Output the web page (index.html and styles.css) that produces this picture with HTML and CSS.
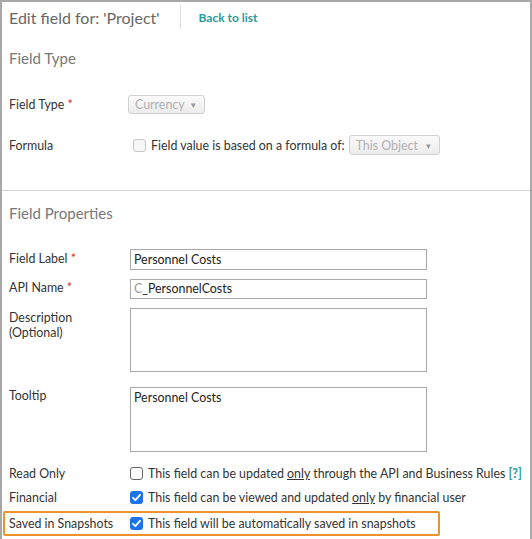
FILE: index.html
```html
<!DOCTYPE html>
<html lang="en">
<head>
  <meta charset="UTF-8">
  <title>Edit field</title>
  <link rel="stylesheet" href="styles.css">
</head>
<body>
  <div class="page">
    <div class="header">
      <span class="title">Edit field for: 'Project'</span>
      <span class="sep"></span>
      <a class="back" href="#">Back to list</a>
    </div>

    <div class="section first">
      <h2>Field Type</h2>
      <div class="row row-type">
        <div class="label">Field Type <span class="req">*</span></div>
        <div class="control"><span class="select sel-currency">Currency <span class="caret">&#9662;</span></span></div>
      </div>
      <div class="row row-formula">
        <div class="label">Formula</div>
        <div class="control inline">
          <span class="check disabled"></span>
          <span class="text">Field value is based on a formula of:</span>
          <span class="select sel-object">This Object <span class="caret">&#9662;</span></span>
        </div>
      </div>
    </div>

    <div class="section second">
      <h2>Field Properties</h2>
      <div class="row row-label">
        <div class="label">Field Label <span class="req">*</span></div>
        <div class="control"><div class="input">Personnel Costs</div></div>
      </div>
      <div class="row row-api">
        <div class="label">API Name <span class="req">*</span></div>
        <div class="control"><div class="input api"><span class="prefix">C</span>_PersonnelCosts</div></div>
      </div>
      <div class="row row-desc">
        <div class="label">Description<br>(Optional)</div>
        <div class="control"><div class="textarea"></div></div>
      </div>
      <div class="row row-tip">
        <div class="label">Tooltip</div>
        <div class="control"><div class="textarea">Personnel Costs</div></div>
      </div>
      <div class="row check-row row-ro">
        <div class="label">Read Only</div>
        <div class="control inline">
          <span class="check"></span>
          <span class="text">This field can be updated <u>only</u> through the API and Business Rules <b class="help">[?]</b></span>
        </div>
      </div>
      <div class="row check-row row-fin">
        <div class="label">Financial</div>
        <div class="control inline">
          <span class="check on"><svg width="13" height="13" viewBox="0 0 13 13"><path d="M3 6.8 L5.4 9.2 L10 3.8" fill="none" stroke="#fff" stroke-width="1.8" stroke-linecap="round" stroke-linejoin="round"/></svg></span>
          <span class="text">This field can be viewed and updated <u>only</u> by financial user</span>
        </div>
      </div>
      <div class="row check-row row-snap highlight">
        <div class="label">Saved in Snapshots</div>
        <div class="control inline">
          <span class="check on"><svg width="13" height="13" viewBox="0 0 13 13"><path d="M3 6.8 L5.4 9.2 L10 3.8" fill="none" stroke="#fff" stroke-width="1.8" stroke-linecap="round" stroke-linejoin="round"/></svg></span>
          <span class="text">This field will be automatically saved in snapshots</span>
        </div>
      </div>
    </div>
  </div>
</body>
</html>
```

FILE: styles.css
```css
body {
  margin: 0;
  font-family: Lato, "Open Sans", sans-serif;
  color: #333;
  background: #fff;
}

.page {
  width: 532px;
  height: 539px;
  border: 2px solid #a8a8a8;
  border-bottom: none;
  box-sizing: border-box;
}

.header {
  display: flex;
  align-items: center;
  height: 30px;
  padding-left: 7px;
}

.title {
  font-size: 16px;
  color: #666;
}

.sep {
  width: 1px;
  height: 24px;
  background: #ddd;
  margin: 0 18px 0 20px;
}

.back {
  font-size: 12px;
  font-weight: bold;
  color: #2a9a9c;
  text-decoration: none;
}

.section {
  padding-left: 7px;
}

.section.first {
  border-bottom: 1px solid #d4d4d4;
  height: 159px;
  box-sizing: border-box;
  padding-top: 16px;
}

.section.second {
  padding-top: 12px;
}

h2 {
  margin: 0;
  font-size: 15px;
  font-weight: normal;
  color: #777;
  line-height: 20px;
}

.row {
  display: flex;
  font-size: 12.4px;
}

.label {
  width: 121px;
  flex: none;
  line-height: 15px;
}

.req {
  color: #e03030;
}

.control {
  flex: 1;
}

.inline {
  display: flex;
  align-items: center;
}

.row-type {
  margin-top: 27px;
  align-items: center;
}

.row-formula {
  margin-top: 21px;
  align-items: center;
}

.select {
  display: inline-flex;
  align-items: center;
  justify-content: space-between;
  white-space: nowrap;
  height: 19px;
  box-sizing: border-box;
  border: 1px solid #d0d0d0;
  border-radius: 3px;
  background: linear-gradient(#fafafa, #ececec);
  color: #b0b0b0;
  padding: 0 8px 0 6px;
  vertical-align: middle;
}

.sel-currency {
  margin-left: -2px;
  width: 77px;
}

.sel-object {
  margin-left: 4px;
  width: 91px;
  height: 20px;
}

.caret {
  font-size: 9px;
  margin-left: 5px;
  color: #999;
}

.check {
  display: inline-flex;
  width: 13px;
  height: 13px;
  box-sizing: border-box;
  border: 1px solid #666;
  border-radius: 3px;
  background: #fff;
  margin-right: 5px;
  flex: none;
}

.check.disabled {
  border-color: #c8c8c8;
  background: #f6f6f6;
  margin-left: 3px;
}

.check.on {
  border: none;
  background: #1a73e8;
}

.input {
  width: 297px;
  height: 21px;
  box-sizing: border-box;
  border: 1px solid #a9a9a9;
  line-height: 19px;
  padding-left: 3px;
  color: #222;
}

.input.api {
  height: 20px;
  line-height: 18px;
}

.prefix {
  color: #999;
}

.textarea {
  width: 297px;
  height: 65px;
  box-sizing: border-box;
  border: 1px solid #a9a9a9;
  padding: 3px;
  line-height: 14px;
  color: #222;
}

.row-label {
  margin-top: 26px;
  align-items: center;
}

.row-label .label,
.row-api .label {
  margin-top: -3px;
}

.row-api {
  margin-top: 9px;
  align-items: center;
}

.row-desc {
  margin-top: 9px;
}

.row-desc .textarea {
  height: 64px;
}

.row-desc .label {
  padding-top: 2px;
}

.row-tip {
  margin-top: 15px;
}

.row-tip .label {
  padding-top: 1px;
}

.check-row {
  align-items: center;
  height: 17px;
}

.row-ro {
  margin-top: 13px;
}

.row-fin {
  margin-top: 7px;
}

.help {
  color: #2a9a9c;
}

.text {
  color: #333;
}

.highlight {
  margin: 5px 0 0 -6px;
  width: 437px;
  height: 25px;
  box-sizing: border-box;
  border: 2px solid #f0922b;
  border-radius: 2px;
  padding-left: 4px;
}
```
